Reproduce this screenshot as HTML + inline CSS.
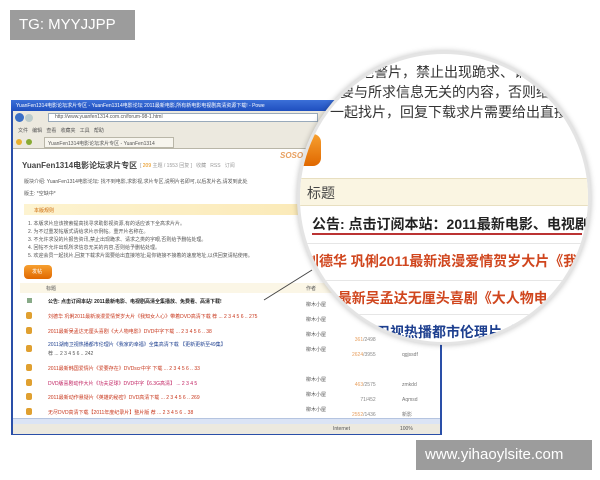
<!DOCTYPE html>
<html><head><meta charset="utf-8"><style>
*{margin:0;padding:0;box-sizing:border-box}
body{width:600px;height:480px;background:#fff;position:relative;overflow:hidden;font-family:"Liberation Sans","Noto Sans CJK SC",sans-serif}
.a{position:absolute;white-space:nowrap}
.s{font-size:5px;color:#555}
.r{color:#c8371c}
.b{color:#1d3f8f}
</style></head><body>

<!-- browser window -->
<div class="a" style="left:11px;top:100px;width:431px;height:335px;border:2px solid #2a4fa8;background:#fff"></div>
<div class="a" style="left:11px;top:100px;width:431px;height:11px;background:linear-gradient(#3b6fd8,#1f4fbf)"></div>
<div class="a s" style="left:16px;top:102px;color:#fff;font-size:5px">YuanFen1314电影论坛求片专区 - YuanFen1314电影论坛 2011最新电影,所有新电影电视剧高清资源下载! - Powe</div>
<div class="a" style="left:13px;top:111px;width:427px;height:38px;background:#ece9df;border-bottom:1px solid #b9b6a8"></div>
<div class="a" style="left:15px;top:113px;width:9px;height:9px;border-radius:50%;background:#3a6fc7"></div>
<div class="a" style="left:25px;top:114px;width:8px;height:8px;border-radius:50%;background:#bcc"></div>
<div class="a" style="left:48px;top:113px;width:270px;height:9px;background:#fff;border:1px solid #9ab"></div>
<div class="a s" style="left:55px;top:114px">http://www.yuanfen1314.com.cn/forum-98-1.html</div>
<div class="a s" style="left:18px;top:127px">文件 &nbsp; 编辑 &nbsp; 查看 &nbsp; 收藏夹 &nbsp; 工具 &nbsp; 帮助</div>
<div class="a" style="left:44px;top:137px;width:130px;height:11px;background:#f7f5ee;border:1px solid #b9b6a8"></div>
<div class="a s" style="left:48px;top:140px">YuanFen1314电影论坛求片专区 - YuanFen1314</div>
<div class="a" style="left:16px;top:139px;width:6px;height:6px;border-radius:50%;background:#e8b030"></div>
<div class="a" style="left:26px;top:139px;width:6px;height:6px;border-radius:50%;background:#8a3"></div>

<div class="a" style="left:22px;top:160px;font-size:8px;font-weight:bold;color:#444">YuanFen1314电影论坛求片专区</div>
<div class="a s" style="left:140px;top:162px;color:#999">[ <span style="color:#e68a00">209</span> 主题 / 1553 回复 ] &nbsp; 收藏 &nbsp; RSS &nbsp; 订阅</div>
<div class="a" style="left:280px;top:151px;font-size:8px;font-weight:bold;font-style:italic;color:#e8a060">SOSO</div>
<div class="a s" style="left:24px;top:178px">版块介绍: YuanFen1314电影论坛: 找不到电影,求影视,求片专区,说明片名即可,以后发片名,请发到此处</div>
<div class="a s" style="left:24px;top:190px">版主: *空缺中*</div>
<div class="a" style="left:24px;top:204px;width:280px;height:11px;background:linear-gradient(90deg,#fdf3d0,#fbeab8)"></div>
<div class="a s" style="left:34px;top:207px;color:#c60">本版规则</div>
<div class="a s" style="left:28px;top:220px;line-height:8px">1. 本版求片应该搜索提高找寻求助影视资源,有的话应该下全高求片片。<br>2. 为不过重发帖版式请给求片示例帖。重开片名称在。<br>3. 不允许求没的片报告资讯,禁止出现跪求、请求之类的字眼,否则给予删帖处理。<br>4. 回帖不允许出现所求信息无关的内容,否则给予删帖处理。<br>5. 欢迎会员一起找片,回复下载求片需要给出直接地址;是你链接不接着的速度地址,以供回复请帖使用。</div>
<div class="a" style="left:24px;top:265px;width:28px;height:14px;border-radius:4px;background:linear-gradient(#f7a030,#e06800)"></div>
<div class="a s" style="left:32px;top:268px;color:#fff">发帖</div>
<div class="a" style="left:20px;top:283px;width:420px;height:10px;background:#fbf6e6"></div>
<div class="a s" style="left:46px;top:285px">标题</div>
<div class="a s" style="left:306px;top:285px">作者</div>

<div class="a" style="left:27px;top:298px;width:5px;height:5px;background:#8a8"></div>
<div class="a s" style="left:48px;top:298px;color:#222;font-weight:bold">公告: 点击订阅本站! 2011最新电影、电视剧高清全集播放、免费看、高清下载!</div>

<div class="a" style="left:26px;top:312px;width:6px;height:7px;background:#e0a030;border-radius:2px"></div>
<div class="a s r" style="left:48px;top:313px">刘德华 巩俐2011最新浪漫爱情贺岁大片《我知女人心》带着DVD高清下载 荐 ... 2 3 4 5 6 .. 275</div>
<div class="a" style="left:26px;top:327px;width:6px;height:7px;background:#e0a030;border-radius:2px"></div>
<div class="a s r" style="left:48px;top:328px">2011最新吴孟达无厘头喜剧《大人物电影》DVD中字下载 ... 2 3 4 5 6 .. 38</div>
<div class="a" style="left:26px;top:345px;width:6px;height:7px;background:#e0a030;border-radius:2px"></div>
<div class="a s b" style="left:48px;top:341px;line-height:9px">2011湖南卫视热播都市伦理片《我家的幸福》全集高清下载 【更新更新至49集】<br><span style="color:#555">荐 ... 2 3 4 5 6 .. 242</span></div>
<div class="a" style="left:26px;top:364px;width:6px;height:7px;background:#e0a030;border-radius:2px"></div>
<div class="a s r" style="left:48px;top:365px">2011最新韩国爱情片《爱要存在》DVDscr中字 下载 ... 2 3 4 5 6 .. 33</div>
<div class="a" style="left:26px;top:379px;width:6px;height:7px;background:#e0a030;border-radius:2px"></div>
<div class="a s" style="left:48px;top:380px;color:#c02060">DVD版喜剧动作大片《功夫足球》DVD中字【6.3G高清】 ... 2 3 4 5</div>
<div class="a" style="left:26px;top:393px;width:6px;height:7px;background:#e0a030;border-radius:2px"></div>
<div class="a s r" style="left:48px;top:394px">2011最新动作悬疑片《英雄的秘密》DVD高清下载 ... 2 3 4 5 6 .. 269</div>
<div class="a" style="left:26px;top:408px;width:6px;height:7px;background:#e0a030;border-radius:2px"></div>
<div class="a s r" style="left:48px;top:409px">无尽DVD高清下载【2011年度纪录片】整片版 荐 ... 2 3 4 5 6 .. 38</div>

<div class="a s" style="left:306px;top:298px;line-height:15px">柳木小屋<br>柳木小屋<br>柳木小屋<br>柳木小屋<br><br>柳木小屋<br>柳木小屋<br>柳木小屋<br>风雷电影</div>
<div class="a s" style="left:352px;top:333px;line-height:15px;text-align:right;color:#888"><span style="color:#e8a060">361</span>/2498<br><span style="color:#e8a060">2624</span>/3955<br><br><span style="color:#e8a060">463</span>/2575<br>71/452<br><span style="color:#e8a060">2552</span>/1436<br>361/4035</div>
<div class="a s" style="left:402px;top:348px;line-height:15px;color:#777">qgjssdf<br><br>zmkdd<br>Aqmsd<br>新影<br>aaaaaaa</div>

<div class="a" style="left:13px;top:418px;width:427px;height:6px;background:#dbe4f5;border-top:1px solid #b5c4e0"></div>
<div class="a" style="left:13px;top:424px;width:427px;height:10px;background:#ece9df"></div>
<div class="a s" style="left:333px;top:426px">Internet</div>
<div class="a s" style="left:400px;top:426px">100%</div>

<!-- leader line -->
<svg class="a" style="left:0;top:0" width="600" height="480"><line x1="264" y1="300" x2="312" y2="270" stroke="#444" stroke-width="1"/></svg>

<!-- magnifier -->
<div class="a" style="left:297px;top:51px;width:294px;height:294px;border-radius:50%;background:#fff;overflow:hidden;border:3px solid #e4e4e4;box-shadow:0 0 6px rgba(0,0,0,.25)">
  <div class="a" style="left:60px;top:8px;font-size:14px;color:#333">把警片，禁止出现跪求、请</div>
  <div class="a" style="left:40px;top:28px;font-size:14px;color:#333">要与所求信息无关的内容，否则给予删</div>
  <div class="a" style="left:30px;top:48px;font-size:14px;color:#333">一起找片，回复下载求片需要给出直接地址</div>
  <div class="a" style="left:-10px;top:80px;width:31px;height:32px;border-radius:0 8px 8px 0;background:linear-gradient(#f7a030,#e06800)"></div>
  <div class="a" style="left:0;top:124px;width:300px;height:28px;background:#faf5e2;border-top:1px solid #e8dfc0;border-bottom:1px solid #e8dfc0"></div>
  <div class="a" style="left:7px;top:129px;font-size:14px;color:#444">标题</div>
  <div class="a" style="left:12px;top:160px;font-size:14px;font-weight:bold;color:#222">公告: 点击订阅本站：2011最新电影、电视剧</div>
  <div class="a" style="left:12px;top:179px;width:270px;height:2px;background:#b33"></div>
  <div class="a" style="left:0;top:189px;width:300px;height:1px;background:#e6e6e6"></div>
  <div class="a" style="left:5px;top:197px;font-size:14px;font-weight:bold;color:#d0461e">刘德华 巩俐2011最新浪漫爱情贺岁大片《我</div>
  <div class="a" style="left:0;top:226px;width:300px;height:1px;background:#e6e6e6"></div>
  <div class="a" style="left:30px;top:234px;font-size:14px;font-weight:bold;color:#d0461e">1最新吴孟达无厘头喜剧《大人物电</div>
  <div class="a" style="left:0;top:260px;width:300px;height:1px;background:#e6e6e6"></div>
  <div class="a" style="left:76px;top:268px;font-size:14px;font-weight:bold;color:#1d3f8f">卫视热播都市伦理片《</div>
</div>

<!-- watermarks -->
<div class="a" style="left:10px;top:10px;width:125px;height:30px;background:#9c9c9c;color:#fff;font-size:15px;line-height:30px;padding-left:9px">TG: MYYJJPP</div>
<div class="a" style="left:416px;top:440px;width:176px;height:30px;background:#9c9c9c;color:#fff;font-size:15px;line-height:30px;padding-left:9px">www.yihaoylsite.com</div>
</body></html>
